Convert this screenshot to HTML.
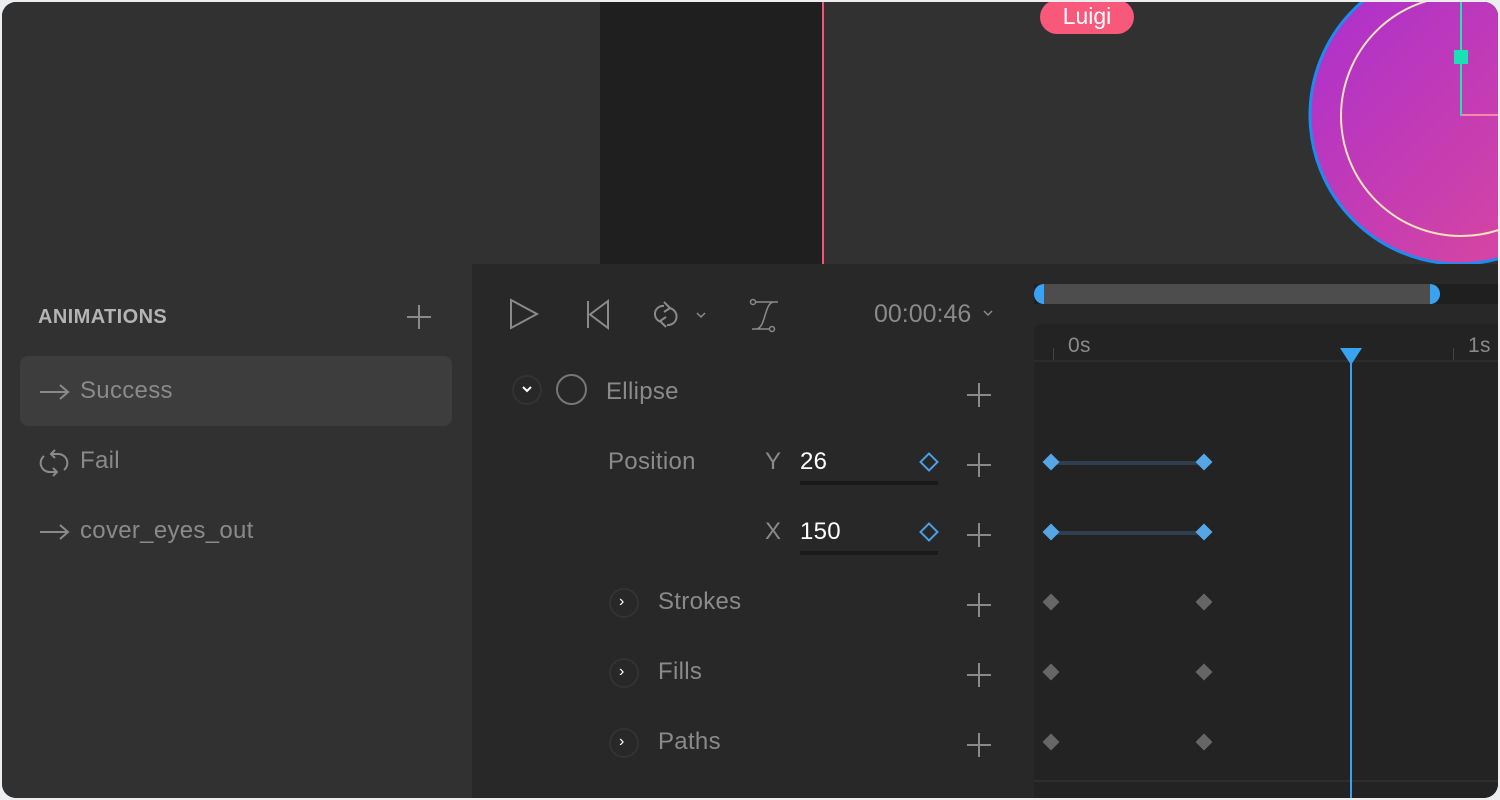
<!DOCTYPE html>
<html><head><style>
body{margin:0;width:1500px;height:800px;background:#eceef0;overflow:hidden;font-family:"Liberation Sans",sans-serif;}
#app{position:absolute;left:2px;top:2px;width:1496px;height:796px;border-radius:14px;overflow:hidden;background:#282828;}
.a{position:absolute;}
.t{position:absolute;color:#8a8a8a;font-size:24px;line-height:28px;white-space:nowrap;letter-spacing:0.3px;}
.plus{position:absolute;width:24px;height:24px;}
.plus:before{content:"";position:absolute;left:11px;top:0;width:2px;height:24px;background:#8a8a8a;}
.plus:after{content:"";position:absolute;top:11px;left:0;height:2px;width:24px;background:#8a8a8a;}
.cc{position:absolute;width:30px;height:30px;border:2px solid #333;border-radius:50%;box-sizing:border-box;}
.kd{position:absolute;width:12px;height:12px;transform:rotate(45deg);}
.gd{position:absolute;width:12px;height:12px;transform:rotate(45deg);background:#666;}
</style></head><body><div id="app">
<div class="a" style="left:0;top:0;width:1496px;height:262px;background:#313131"></div>
<div class="a" style="left:598px;top:0;width:222px;height:262px;background:#1f1f1f"></div>
<div class="a" style="left:820px;top:0;width:2px;height:262px;background:#f2537a"></div>
<div class="a" style="left:1038px;top:-2px;width:94px;height:34px;border-radius:17px;background:#f8587a;color:#fff;font-size:23px;line-height:32px;text-align:center">Luigi</div>
<svg class="a" style="left:0;top:0" width="1496" height="262">
<defs><linearGradient id="g" x1="0" y1="0" x2="1" y2="1"><stop offset="0" stop-color="#a82ed0"/><stop offset="1" stop-color="#e04a98"/></linearGradient></defs>
<circle cx="1457" cy="113" r="149" fill="url(#g)" stroke="#1c8cf0" stroke-width="3"/>
<circle cx="1459" cy="114" r="120" fill="none" stroke="#f6e3b8" stroke-width="2"/>
<path d="M1459 0V113H1500" fill="none" stroke="#1ee6b5" stroke-width="2"/>
<path d="M1460 113H1500" stroke="#f08aa8" stroke-width="2"/>
<rect x="1452" y="48" width="14" height="14" fill="#18e2b4"/>
</svg>
<div class="a" style="left:0;top:262px;width:470px;height:534px;background:#313131"></div>
<div class="t" style="left:36px;top:301px;font-size:20px;color:#b4b4b4;font-weight:bold;letter-spacing:0.4px">ANIMATIONS</div>
<div class="plus" style="left:405px;top:303px"></div>
<div class="a" style="left:18px;top:354px;width:432px;height:70px;border-radius:8px;background:#3d3d3d"></div>
<svg class="a" style="left:36px;top:376px" width="34" height="30" fill="none" stroke="#8a8a8a" stroke-width="2"><path d="M2 14H30M22 7L30 14L22 21"/></svg>
<div class="t" style="left:78px;top:375px">Success</div>
<svg class="a" style="left:36px;top:446px" width="34" height="32" fill="none" stroke="#8a8a8a" stroke-width="2"><path d="M14 6H20A9 9 0 0 1 26 22M17 2L13 6L17 10M18 24H12A9 9 0 0 1 6 8M15 28L19 24L15 20"/></svg>
<div class="t" style="left:78px;top:445px">Fail</div>
<svg class="a" style="left:36px;top:516px" width="34" height="30" fill="none" stroke="#8a8a8a" stroke-width="2"><path d="M2 14H30M22 7L30 14L22 21"/></svg>
<div class="t" style="left:78px;top:515px">cover_eyes_out</div>
<svg class="a" style="left:506px;top:294px" width="300" height="40" fill="none" stroke="#8a8a8a" stroke-width="2">
<path d="M3 4L29 18L3 32Z"/>
<path d="M80 5V32M100 5L82 18.5L100 32Z"/>
<path d="M164 12A8 8 0 0 1 162 29M159 6L165 12L159 16M157 26A8 8 0 0 1 159 10M161 31L155 25L161 21" transform="translate(-3,0)"/>
<path d="M189 17L193 21L197 17" stroke-width="1.5"/>
<path d="M270 6H248M244 33H262M266 6C256 6 258 33 248 33" stroke-width="1.5"/><circle cx="245" cy="6" r="2.5" stroke-width="1.5"/><circle cx="264" cy="33" r="2.5" stroke-width="1.5"/>
</svg>
<div class="t" style="left:872px;top:298px;font-size:25px;letter-spacing:0">00:00:46</div>
<svg class="a" style="left:980px;top:306px" width="12" height="10" fill="none" stroke="#8a8a8a" stroke-width="1.5"><path d="M2 3L6 7L10 3"/></svg>
<div class="cc" style="left:510px;top:373px"></div>
<svg class="a" style="left:519px;top:383px" width="12" height="10" fill="none" stroke="#fff" stroke-width="2"><path d="M2 2L6 6L10 2"/></svg>
<div class="a" style="left:554px;top:372px;width:31px;height:31px;border:2px solid #777;border-radius:50%;box-sizing:border-box"></div>
<div class="t" style="left:604px;top:376px">Ellipse</div>
<div class="plus" style="left:965px;top:381px"></div>
<div class="t" style="left:606px;top:446px">Position</div>
<div class="t" style="left:763px;top:446px">Y</div>
<div class="t" style="left:798px;top:446px;color:#fff">26</div>
<div class="a" style="left:798px;top:479px;width:138px;height:4px;background:#1a1a1a"></div>
<div class="kd" style="left:920px;top:453px;border:2px solid #4aa0e6;width:10px;height:10px"></div>
<div class="plus" style="left:965px;top:451px"></div>
<div class="t" style="left:763px;top:516px">X</div>
<div class="t" style="left:798px;top:516px;color:#fff">150</div>
<div class="a" style="left:798px;top:549px;width:138px;height:4px;background:#1a1a1a"></div>
<div class="kd" style="left:920px;top:523px;border:2px solid #4aa0e6;width:10px;height:10px"></div>
<div class="plus" style="left:965px;top:521px"></div>
<div class="cc" style="left:607px;top:586px"></div><div class="t" style="left:617px;top:586px;color:#fff;font-size:16px">›</div>
<div class="t" style="left:656px;top:586px">Strokes</div><div class="plus" style="left:965px;top:591px"></div>
<div class="cc" style="left:607px;top:656px"></div><div class="t" style="left:617px;top:656px;color:#fff;font-size:16px">›</div>
<div class="t" style="left:656px;top:656px">Fills</div><div class="plus" style="left:965px;top:661px"></div>
<div class="cc" style="left:607px;top:726px"></div><div class="t" style="left:617px;top:726px;color:#fff;font-size:16px">›</div>
<div class="t" style="left:656px;top:726px">Paths</div><div class="plus" style="left:965px;top:731px"></div>
<div class="a" style="left:1032px;top:282px;width:464px;height:20px;background:#1f1f1f"></div>
<div class="a" style="left:1032px;top:282px;width:406px;height:20px;border-radius:10px;background:#4d4d4d"></div>
<div class="a" style="left:1032px;top:282px;width:10px;height:20px;border-radius:10px 0 0 10px;background:#3aa2f2"></div>
<div class="a" style="left:1428px;top:282px;width:10px;height:20px;border-radius:0 10px 10px 0;background:#3aa2f2"></div>
<div class="a" style="left:1032px;top:322px;width:464px;height:474px;background:#232323;border-radius:8px 0 0 0"></div>
<div class="a" style="left:1032px;top:358px;width:464px;height:2px;background:#2c2c2c"></div>
<div class="a" style="left:1051px;top:346px;width:1px;height:12px;background:#444"></div>
<div class="a" style="left:1451px;top:346px;width:1px;height:12px;background:#444"></div>
<div class="t" style="left:1066px;top:330px;font-size:21px">0s</div>
<div class="t" style="left:1466px;top:330px;font-size:21px">1s</div>
<div class="a" style="left:1032px;top:778px;width:464px;height:2px;background:#2e2e2e"></div>
<div class="a" style="left:1348px;top:350px;width:2px;height:446px;background:#3aa2f2"></div>
<svg class="a" style="left:1338px;top:346px" width="22" height="18"><path d="M0 0H22L11 17Z" fill="#3aa2f2"/></svg>
<div class="a" style="left:1050px;top:459px;width:154px;height:4px;background:#2f3f4e"></div>
<div class="a" style="left:1050px;top:529px;width:154px;height:4px;background:#2f3f4e"></div>
<div class="kd" style="left:1043px;top:454px;background:#56a6e6"></div>
<div class="kd" style="left:1196px;top:454px;background:#56a6e6"></div>
<div class="kd" style="left:1043px;top:524px;background:#56a6e6"></div>
<div class="kd" style="left:1196px;top:524px;background:#56a6e6"></div>
<div class="gd" style="left:1043px;top:594px"></div>
<div class="gd" style="left:1196px;top:594px"></div>
<div class="gd" style="left:1043px;top:664px"></div>
<div class="gd" style="left:1196px;top:664px"></div>
<div class="gd" style="left:1043px;top:734px"></div>
<div class="gd" style="left:1196px;top:734px"></div>
</div></body></html>
